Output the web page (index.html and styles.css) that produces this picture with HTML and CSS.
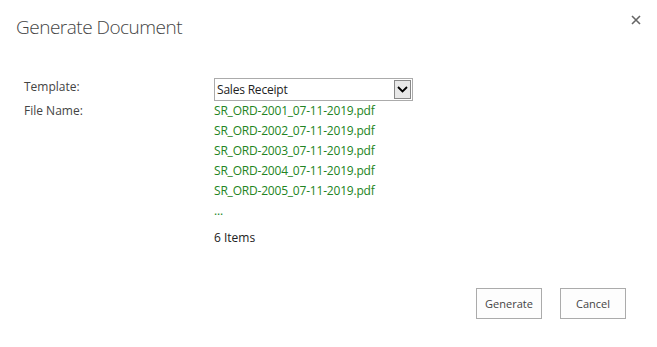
FILE: index.html
```html
<!DOCTYPE html>
<html>
<head>
<meta charset="utf-8">
<link rel="stylesheet" href="styles.css">
</head>
<body>
<div class="dialog">
  <div class="header">
    <h1 class="title">Generate Document</h1>
    <button class="close" aria-label="Close">
      <svg width="10" height="10" viewBox="0 0 10 10"><path d="M1 1L9 9M9 1L1 9" stroke="#666" stroke-width="1.6"/></svg>
    </button>
  </div>
  <div class="form">
    <div class="row">
      <div class="label">Template:</div>
      <div class="field">
        <div class="select">
          <span class="select-text">Sales Receipt</span>
          <span class="select-btn"><svg width="11" height="7" viewBox="0 0 11 7"><path d="M1 1L5.5 5.5L10 1" stroke="#000" stroke-width="1.8" fill="none"/></svg></span>
        </div>
      </div>
    </div>
    <div class="row">
      <div class="label">File Name:</div>
      <div class="field">
        <ul class="files">
          <li>SR_ORD-2001_07-11-2019.pdf</li>
          <li>SR_ORD-2002_07-11-2019.pdf</li>
          <li>SR_ORD-2003_07-11-2019.pdf</li>
          <li>SR_ORD-2004_07-11-2019.pdf</li>
          <li>SR_ORD-2005_07-11-2019.pdf</li>
          <li>...</li>
        </ul>
        <div class="count">6 Items</div>
      </div>
    </div>
  </div>
  <div class="actions">
    <button class="btn">Generate</button>
    <button class="btn">Cancel</button>
  </div>
</div>
</body>
</html>
```
FILE: styles.css
```css
html, body { margin: 0; padding: 0; background: #fff; }
body { font-family: "Open Sans", "Noto Sans", sans-serif; color: #444; }
.dialog { width: 657px; height: 347px; position: relative; box-sizing: border-box; }
.header { display: flex; justify-content: space-between; align-items: flex-start; padding: 14px 16px 0 16px; }
.title { margin: 0; font-size: 19px; font-weight: 300; color: #444; line-height: 26px; letter-spacing: -0.5px; }
.close { border: 0; background: none; padding: 0; margin: 0; width: 12px; height: 12px; display: flex; align-items: center; justify-content: center; margin-top: 0; margin-right: -1px; }
.form { padding: 36px 0 0 24px; }
.row { display: flex; }
.label { width: 190px; font-size: 12px; line-height: 20px; color: #444; }
.field { font-size: 12px; }
.row:first-child .label { line-height: 22px; }
.select { width: 199px; height: 23px; box-sizing: border-box; border: 1px solid #ababab; display: flex; align-items: stretch; margin-top: 2px; }
.select-text { flex: 1; padding-left: 2px; line-height: 21px; color: #222; font-size: 12px; letter-spacing: -0.2px; }
.select-btn { width: 17px; background: #e8e8e8; display: flex; align-items: center; justify-content: center; margin: 1px; box-sizing: border-box; border: 1px solid #888; }
.files { list-style: none; margin: 0; padding: 0; color: #228422; letter-spacing: -0.2px; }
.files li { line-height: 20px; }
.count { margin-top: 7px; line-height: 20px; color: #222; }
.actions { display: flex; justify-content: flex-end; gap: 18px; padding-right: 31px; margin-top: 40px; }
.btn { width: 66px; height: 31px; border: 1px solid #ababab; background: #fdfdfd; font-family: inherit; font-size: 11px; color: #444; padding: 0; }
```
